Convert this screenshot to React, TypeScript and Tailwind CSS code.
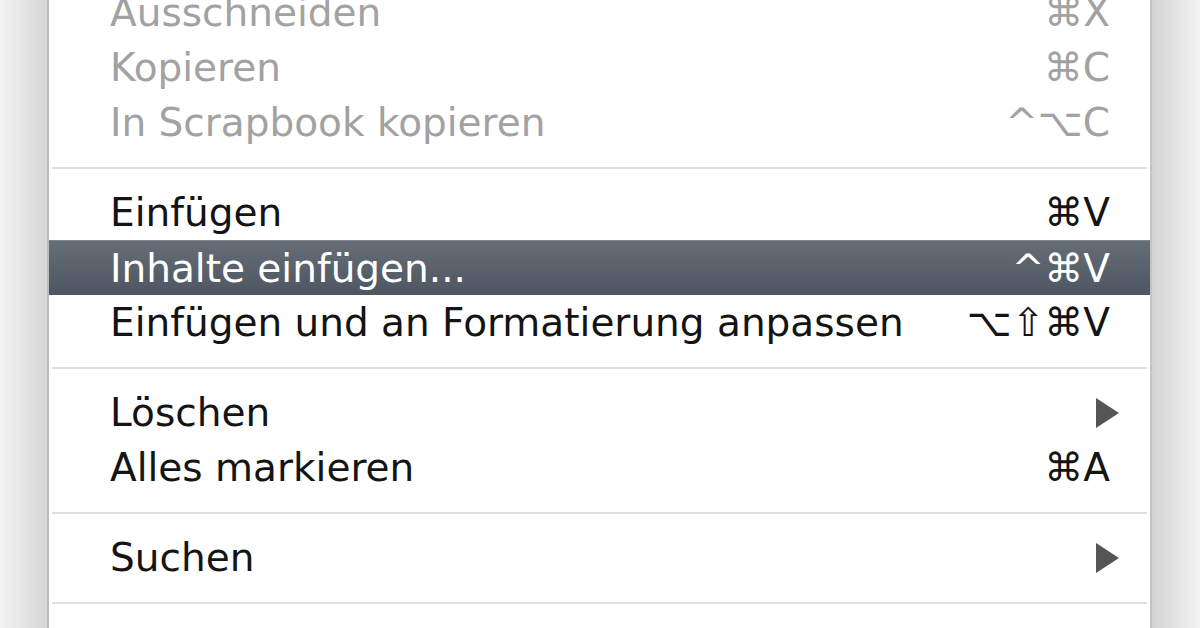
import React from 'react'

type Item =
  | { kind: 'sep' }
  | { kind: 'item'; label: string; keys?: string; disabled?: boolean; active?: boolean; submenu?: boolean }

const items: Item[] = [
  { kind: 'item', label: 'Ausschneiden', keys: '⌘X', disabled: true },
  { kind: 'item', label: 'Kopieren', keys: '⌘C', disabled: true },
  { kind: 'item', label: 'In Scrapbook kopieren', keys: '^⌥C', disabled: true },
  { kind: 'sep' },
  { kind: 'item', label: 'Einfügen', keys: '⌘V' },
  { kind: 'item', label: 'Inhalte einfügen...', keys: '^⌘V', active: true },
  { kind: 'item', label: 'Einfügen und an Formatierung anpassen', keys: '⌥⇧⌘V' },
  { kind: 'sep' },
  { kind: 'item', label: 'Löschen', submenu: true },
  { kind: 'item', label: 'Alles markieren', keys: '⌘A' },
  { kind: 'sep' },
  { kind: 'item', label: 'Suchen', submenu: true },
  { kind: 'sep' },
  { kind: 'item', label: 'Rechtschreibung und Grammatik', disabled: true, submenu: true },
]

function Arrow() {
  return (
    <svg width="24" height="30" viewBox="0 0 24 30" className="mr-[-9px]">
      <polygon points="1,0 24,15 1,30" fill="#555555" />
    </svg>
  )
}

function Row({ item }: { item: Extract<Item, { kind: 'item' }> }) {
  const color = item.active ? 'text-white' : item.disabled ? 'text-[#a2a2a2]' : 'text-[#141414]'
  return (
    <div
      className={`flex h-[55px] items-center justify-between pl-[61px] pr-[40px] leading-[55px] ${color} ${
        item.active ? 'border-t border-[#7c838b] bg-gradient-to-b from-[#656d77] to-[#4e5661]' : ''
      }`}
    >
      <span className="whitespace-nowrap">{item.label}</span>
      {item.submenu ? <Arrow /> : <span className="whitespace-nowrap">{item.keys}</span>}
    </div>
  )
}

export default function App() {
  return (
    <div
      className="flex h-[628px] w-[1200px] overflow-hidden bg-white text-[39px]"
      style={{ fontFamily: '"DejaVu Sans", "Noto Sans", sans-serif' }}
    >
      <div className="w-[47px] shrink-0 bg-gradient-to-r from-[#f3f3f3] to-[#d6d6d6]" />
      <div className="w-[2px] shrink-0 bg-[#bcbcbc]" />
      <div className="flex-1 bg-white">
        <div className="mt-[-15px]">
          {items.map((it, i) =>
            it.kind === 'sep' ? (
              <div key={i} className="flex h-[35px] items-center px-[3px]">
                <div className="h-[2px] w-full bg-[#e0e0e0]" />
              </div>
            ) : (
              <Row key={i} item={it} />
            )
          )}
        </div>
      </div>
      <div className="w-[2px] shrink-0 bg-[#c4c4c4]" />
      <div className="w-[48px] shrink-0 bg-gradient-to-r from-[#d3d3d3] to-[#f4f4f4]" />
    </div>
  )
}
